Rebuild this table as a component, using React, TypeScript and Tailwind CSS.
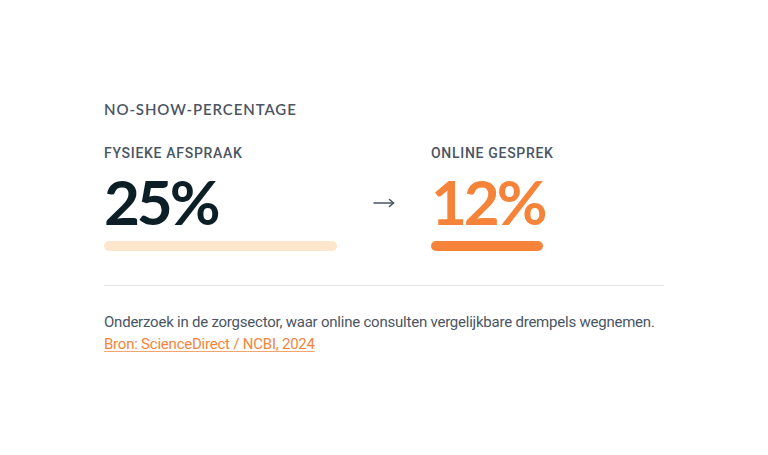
import React from "react";

export default function App() {
  return (
    <div className="min-h-[455px] w-full bg-white">
      <div className="mx-auto w-[560px] pt-[99px]" style={{ fontFamily: "Roboto, 'Liberation Sans', sans-serif" }}>
        <h2
          className="text-[15px] leading-[20px] font-semibold tracking-[0.06em] text-[#4b5563]"
          style={{ fontFamily: "Lato, 'Noto Sans', sans-serif" }}
        >
          NO-SHOW-PERCENTAGE
        </h2>
        <div className="mt-[24px] grid grid-cols-[1fr_94px_1fr]">
          <div>
            <div className="text-[14px] leading-[20px] font-medium tracking-[0.05em] text-[#4b5563]">FYSIEKE AFSPRAAK</div>
            <div
              className="mt-[6px] text-[62px] leading-[64px] font-bold tracking-[-0.05em] text-[#0c1f27]"
              style={{ fontFamily: "Lato, 'Noto Sans', sans-serif" }}
            >
              25%
            </div>
            <div className="mt-[8px] h-[10px] w-full rounded-full bg-[#fde6cb]" />
          </div>
          <div className="flex items-center justify-center pt-[12px]">
            <svg width="22" height="12" viewBox="0 0 22 12" fill="none" stroke="#4b5563" strokeWidth="1.6" strokeLinecap="round" strokeLinejoin="round">
              <line x1="1" y1="6" x2="20.5" y2="6" />
              <polyline points="16.5,2.5 20.5,6 16.5,9.5" />
            </svg>
          </div>
          <div>
            <div className="text-[14px] leading-[20px] font-medium tracking-[0.05em] text-[#4b5563]">ONLINE GESPREK</div>
            <div
              className="mt-[6px] text-[62px] leading-[64px] font-bold tracking-[-0.05em] text-[#f5843a]"
              style={{ fontFamily: "Lato, 'Noto Sans', sans-serif" }}
            >
              12%
            </div>
            <div className="mt-[8px] h-[10px] rounded-full bg-[#f5843a]" style={{ width: "48%" }} />
          </div>
        </div>
        <div className="mt-[34px] h-px bg-[#e5e7eb]" />
        <p className="mt-[25px] whitespace-nowrap text-[15px] leading-[22px] tracking-[-0.015em] text-[#4b5563]">
          Onderzoek in de zorgsector, waar online consulten vergelijkbare drempels wegnemen.
          <br />
          <a href="#" className="text-[#f5843a] underline underline-offset-2 decoration-[#f5a66f]">
            Bron: ScienceDirect / NCBI, 2024
          </a>
        </p>
      </div>
    </div>
  );
}
